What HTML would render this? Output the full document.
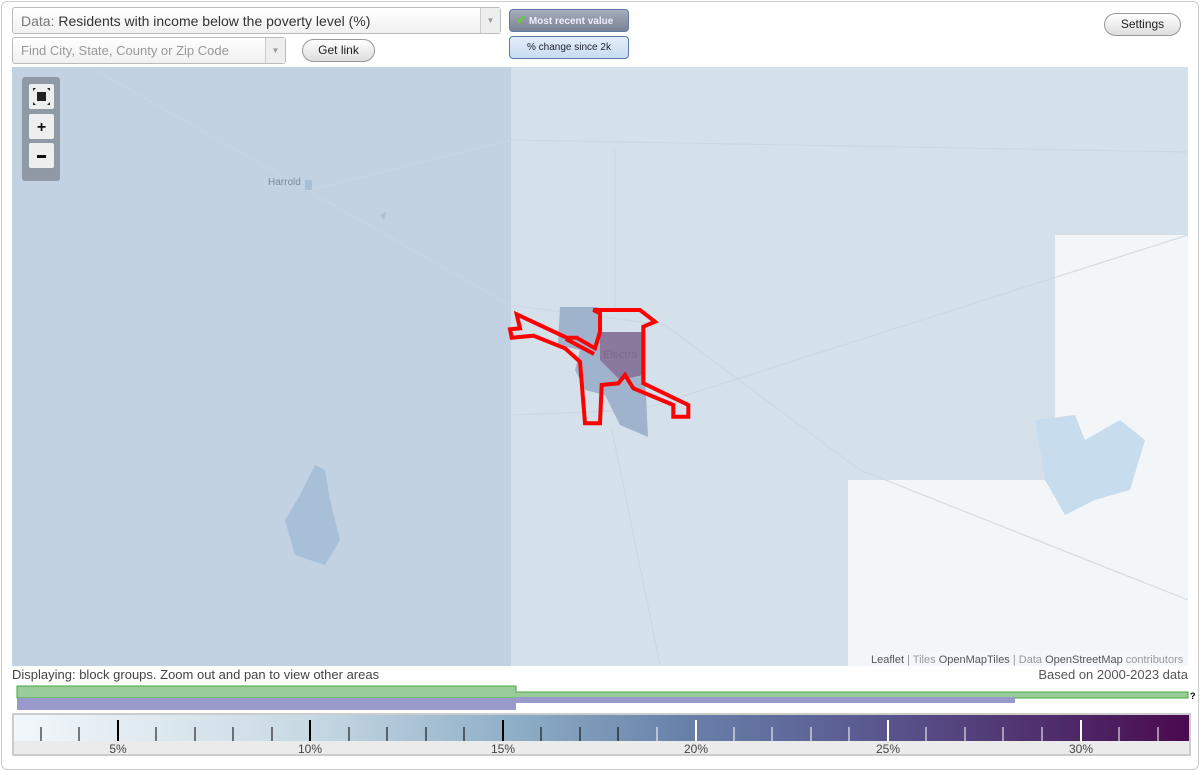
<!DOCTYPE html>
<html><head><style>
*{box-sizing:border-box;margin:0;padding:0}
body{width:1200px;height:771px;background:#fff;font-family:"Liberation Sans",Arial,sans-serif;position:relative;overflow:hidden}
.frame{position:absolute;left:1px;top:1px;width:1198px;height:769px;border:1px solid #ccc;border-radius:6px}
.abs{position:absolute}
.sel{border:1px solid #bbb;border-radius:3px;background:linear-gradient(#fff,#f0f0f0);font-size:14px;color:#333;padding:5px 8px}
.arr{position:absolute;right:0;top:0;bottom:0;width:20px;border-left:1px solid #ccc;background:#eee;color:#999;font-size:8px;text-align:center}
.btn{border:1px solid #999;border-radius:12px;background:linear-gradient(#fff,#ddd);font-size:12px;text-align:center;color:#222}
</style></head><body>
<div class="frame"></div>
<div class="abs sel" style="left:12px;top:7px;width:489px;height:27px"><span style="color:#777">Data:</span> Residents with income below the poverty level (%)<div class="arr" style="line-height:26px">▼</div></div>
<div class="abs sel" style="left:12px;top:37px;width:274px;height:27px;font-size:13px;color:#999">Find City, State, County or Zip Code<div class="arr" style="line-height:26px">▼</div></div>
<div class="abs btn" style="left:302px;top:39px;width:73px;height:23px;line-height:21px">Get link</div>
<div class="abs" style="left:509px;top:9px;width:120px;height:23px;border:1px solid #5a7aa8;border-radius:4px;background:linear-gradient(#a6adbb,#7a8294);color:#eef;font-size:10px;font-weight:bold;line-height:21px;padding-left:6px"><span style="color:#6c3;font-size:12px">✔</span> Most recent value</div>
<div class="abs" style="left:509px;top:36px;width:120px;height:23px;border:1px solid #5a7aa8;border-radius:4px;background:linear-gradient(#e4eefa,#c8dbf0);color:#223;font-size:10px;line-height:21px;text-align:center">% change since 2k</div>
<div class="abs btn" style="left:1104px;top:13px;width:77px;height:23px;line-height:21px">Settings</div>

<svg class="abs" style="left:12px;top:67px" width="1176" height="599" viewBox="12 67 1176 599">
<rect x="12" y="67" width="1176" height="599" fill="#d5e1ea"/>
<rect x="12" y="67" width="499" height="599" fill="#c3d2e2"/>
<path d="M848 480 L1055 480 L1055 235 L1188 235 L1188 666 L848 666Z" fill="#f3f6f9"/>
<g stroke="#cbd6e0" fill="none" stroke-width="1.2" opacity=".8">
<path d="M95 70 L510 305 L665 325 L860 470 L1188 600"/>
<path d="M310 190 L511 140 L1188 152"/>
<path d="M615 150 L615 310 M612 430 L660 665"/>
<path d="M511 415 L640 410 L1188 235"/>
</g>
<path d="M1035 420 L1075 415 L1085 440 L1120 420 L1145 440 L1130 490 L1095 500 L1065 515 L1045 480Z" fill="#c7dced"/>
<path d="M315 465 L325 470 L330 500 L340 540 L325 565 L295 555 L285 520 L300 495Z" fill="#a8bfd8"/>
<path d="M305 180 L312 180 L312 190 L305 190Z M380 215 L386 212 L384 220Z" fill="#a8bfd8"/>
<path d="M560 307 L598 307 L600 332 L643 332 L648 437 L620 425 L605 395 L585 390 L575 370 L580 350 L558 345Z" fill="#9fb3cd"/>
<path d="M600 332 L643 332 L643 375 L620 380 L600 360Z" fill="#8a789d"/>
<text x="268" y="185" font-size="10" fill="#7a8ca0" font-family="Liberation Sans">Harrold</text>
<text x="603" y="358" font-size="11" fill="#7a6a8c" font-family="Liberation Sans">Electra</text>
<path d="M516.7 314.3 L566.7 337.7 L576.7 337.7 L595 348.3 L600 331.7 L600 313.3 L593.3 310 L640 310 L655 321.7 L643.3 326.7 L643.3 383.3 L688.3 405 L688.3 416.7 L673.3 416.7 L673.3 405 L633.3 388.3 L625 375 L618.3 383.3 L601.7 385 L600 423.3 L585 423.3 L580 361.7 L565 348.3 L533.3 335.7 L511.7 337.7 L510 329.3 L520 328.3Z" fill="none" stroke="#f00" stroke-width="4" stroke-linejoin="miter"/>
<line x1="566" y1="339" x2="594" y2="354" stroke="#f00" stroke-width="4"/>
<rect x="868" y="651" width="320" height="15" fill="#f3f6f9" opacity=".9"/>
<text x="871" y="663" font-size="11" fill="#999" font-family="Liberation Sans"><tspan fill="#555">Leaflet</tspan> | Tiles <tspan fill="#555">OpenMapTiles</tspan> | Data <tspan fill="#555">OpenStreetMap</tspan> contributors</text>
<rect x="22" y="77" width="38" height="104" rx="3" fill="#8f9aa6"/>
<rect x="29" y="84" width="25" height="25" rx="2" fill="#eee"/>
<rect x="37" y="92" width="9" height="9" fill="#222"/>
<path d="M33 88 L36 88 L33 91Z M50 88 L47 88 L50 91Z M33 105 L36 105 L33 102Z M50 105 L47 105 L50 102Z" fill="#222"/>
<rect x="29" y="114" width="25" height="25" rx="2" fill="#eee"/>
<text x="41.5" y="132" font-size="16" font-weight="bold" text-anchor="middle" fill="#111" font-family="Liberation Sans">+</text>
<rect x="29" y="143" width="25" height="25" rx="2" fill="#eee"/>
<rect x="37" y="155" width="9" height="3" fill="#111"/>
</svg>

<div class="abs" style="left:12px;top:667px;font-size:13px;color:#444">Displaying: block groups. Zoom out and pan to view other areas</div>
<div class="abs" style="right:12px;top:667px;font-size:13px;color:#555">Based on 2000-2023 data</div>
<svg class="abs" style="left:0;top:684px" width="1200" height="28">
<path d="M17 2 L516 2 L516 8 L1188 8 L1188 14 L17 14Z" fill="#9c9" stroke="#4a4" stroke-width="1"/>
<path d="M17 14 L516 14 L516 13 L1015 13 L1015 19 L516 19 L516 26 L17 26Z" fill="#99c"/>
<text x="1190" y="15" font-size="9" font-weight="bold" font-family="Liberation Sans">?</text>
</svg>
<div class="abs" style="left:12px;top:713px;width:1179px;height:43px;border:2px solid #ccc;background:#ebebeb">
<div style="position:absolute;left:0;top:0;right:0;height:26px;background:linear-gradient(90deg,#f2f7fb,#c8d9e4 25%,#90b0c8 42%,#6a84ab 56%,#5a5b92 72%,#4f2e6c 88%,#4a0a4e)"></div>
<svg style="position:absolute;left:-12px;top:0" width="1200" height="40">
<g stroke-width="1">
<path d="M39 12V26M77 12V26M154 12V26M193 12V26M231 12V26M270 12V26M347 12V26M385 12V26M424 12V26M462 12V26M539 12V26M578 12V26M616 12V26" stroke="#000"/>
<path d="M655 12V26M732 12V26M770 12V26M809 12V26M847 12V26M924 12V26M963 12V26M1001 12V26M1040 12V26M1117 12V26M1156 12V26" stroke="#fff"/>
</g>
<g stroke-width="2"><path d="M116 5V26M308 5V26M501 5V26" stroke="#000"/><path d="M694 5V26M886 5V26M1079 5V26" stroke="#fff"/></g>
<g font-size="12" fill="#444" text-anchor="middle" font-family="Liberation Sans">
<text x="116" y="38">5%</text><text x="308" y="38">10%</text><text x="501" y="38">15%</text><text x="694" y="38">20%</text><text x="886" y="38">25%</text><text x="1079" y="38">30%</text></g>
</svg>
</div>
</body></html>
